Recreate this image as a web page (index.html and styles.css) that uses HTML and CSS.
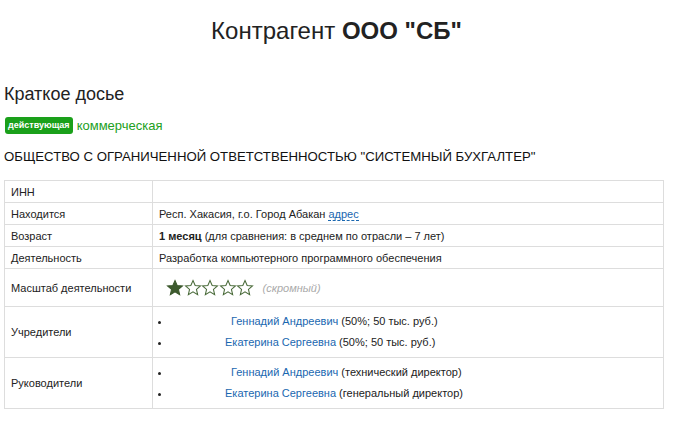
FILE: index.html
```html
<!DOCTYPE html>
<html lang="ru">
<head>
    <meta charset="UTF-8">
    <meta name="viewport" content="width=device-width, initial-scale=1.0">
    <title>Контрагент ООО "СБ"</title>
    <link rel="stylesheet" href="styles.css">
</head>
<body>

<h1 class="page-title">Контрагент <b>ООО "СБ"</b></h1>

<h2 class="section-title">Краткое досье</h2>

<div class="status-line">
    <span class="badge">действующая</span>
    <span class="kind">коммерческая</span>
</div>

<h3 class="full-name">ОБЩЕСТВО С ОГРАНИЧЕННОЙ ОТВЕТСТВЕННОСТЬЮ "СИСТЕМНЫЙ БУХГАЛТЕР"</h3>

<table class="dossier">
    <tr>
        <td class="label">ИНН</td>
        <td></td>
    </tr>
    <tr>
        <td class="label">Находится</td>
        <td>Респ. Хакасия, г.о. Город Абакан <a href="#" class="dotted">адрес</a></td>
    </tr>
    <tr>
        <td class="label">Возраст</td>
        <td><b>1 месяц</b> (для сравнения: в среднем по отрасли – 7 лет)</td>
    </tr>
    <tr>
        <td class="label">Деятельность</td>
        <td>Разработка компьютерного программного обеспечения</td>
    </tr>
    <tr class="tall">
        <td class="label">Масштаб деятельности</td>
        <td>
            <span class="stars">
                <svg viewBox="0 0 24 24" class="star full"><path d="M12 2l2.9 6.6 7.1.6-5.4 4.7 1.6 7-6.2-3.7-6.2 3.7 1.6-7L2 9.2l7.1-.6z"/></svg>
                <svg viewBox="0 0 24 24" class="star"><path d="M12 2l2.9 6.6 7.1.6-5.4 4.7 1.6 7-6.2-3.7-6.2 3.7 1.6-7L2 9.2l7.1-.6z"/></svg>
                <svg viewBox="0 0 24 24" class="star"><path d="M12 2l2.9 6.6 7.1.6-5.4 4.7 1.6 7-6.2-3.7-6.2 3.7 1.6-7L2 9.2l7.1-.6z"/></svg>
                <svg viewBox="0 0 24 24" class="star"><path d="M12 2l2.9 6.6 7.1.6-5.4 4.7 1.6 7-6.2-3.7-6.2 3.7 1.6-7L2 9.2l7.1-.6z"/></svg>
                <svg viewBox="0 0 24 24" class="star"><path d="M12 2l2.9 6.6 7.1.6-5.4 4.7 1.6 7-6.2-3.7-6.2 3.7 1.6-7L2 9.2l7.1-.6z"/></svg>
            </span>
            <span class="scale-note">(скромный)</span>
        </td>
    </tr>
    <tr>
        <td class="label">Учредители</td>
        <td>
            <ul class="people">
                <li><a href="#"><span class="hidden-name"></span>Геннадий Андреевич</a> (50%; 50 тыс. руб.)</li>
                <li><a href="#"><span class="hidden-name short"></span>Екатерина Сергеевна</a> (50%; 50 тыс. руб.)</li>
            </ul>
        </td>
    </tr>
    <tr>
        <td class="label">Руководители</td>
        <td>
            <ul class="people">
                <li><a href="#"><span class="hidden-name"></span>Геннадий Андреевич</a> (технический директор)</li>
                <li><a href="#"><span class="hidden-name short"></span>Екатерина Сергеевна</a> (генеральный директор)</li>
            </ul>
        </td>
    </tr>
</table>

</body>
</html>
```

FILE: styles.css
```css
/* Base */
body {
    font-family: 'Liberation Sans', Arial, sans-serif;
    color: #222;
    margin: 0;
    padding: 0 4px;
    background: #fff;
}

a {
    color: #1a67b0;
    text-decoration: none;
}

/* Titles */
.page-title {
    font-size: 24px;
    font-weight: normal;
    text-align: center;
    margin: 16px 0 0;
    line-height: 30px;
}

.section-title {
    font-size: 18px;
    font-weight: normal;
    margin: 37px 0 0;
    line-height: 22px;
}

/* Status */
.status-line {
    display: flex;
    align-items: center;
    gap: 4px;
    margin-top: 12px;
    padding-left: 1px;
}

.badge {
    background: #1aa01a;
    color: #fff;
    font-size: 9px;
    font-weight: bold;
    padding: 0 3px;
    line-height: 17px;
    border-radius: 3px;
}

.kind {
    color: #22a022;
    font-size: 13px;
}

.full-name {
    font-size: 13.2px;
    font-weight: normal;
    margin: 15px 0 0;
    line-height: 16px;
    color: #111;
}

/* Table */
.dossier {
    border-collapse: collapse;
    width: 660px;
    margin-top: 15px;
    font-size: 11px;
}

.dossier td {
    border: 1px solid #ddd;
    padding: 0 6px;
    height: 21px;
    vertical-align: middle;
}

.dossier td.label {
    width: 135px;
}

.dossier tr.tall td {
    height: 37px;
}

.dotted {
    border-bottom: 1px dashed #1a67b0;
}

/* Stars */
.stars {
    display: inline-flex;
    vertical-align: middle;
    margin-left: 7px;
}

.star {
    width: 18px;
    height: 18px;
    margin-right: -0.5px;
    fill: #fff;
    stroke: #4a6b3a;
    stroke-width: 1.4;
}

.star.full {
    fill: #3d5a2e;
    stroke: #3d5a2e;
}

.scale-note {
    color: #aaa;
    font-style: italic;
    margin-left: 6px;
    vertical-align: middle;
}

/* People lists */
.people {
    margin: 0;
    padding: 4px 0 4px 12px;
}

.people li {
    line-height: 21px;
}

.hidden-name {
    display: inline-block;
    width: 60px;
}

.hidden-name.short {
    width: 54px;
}
```
